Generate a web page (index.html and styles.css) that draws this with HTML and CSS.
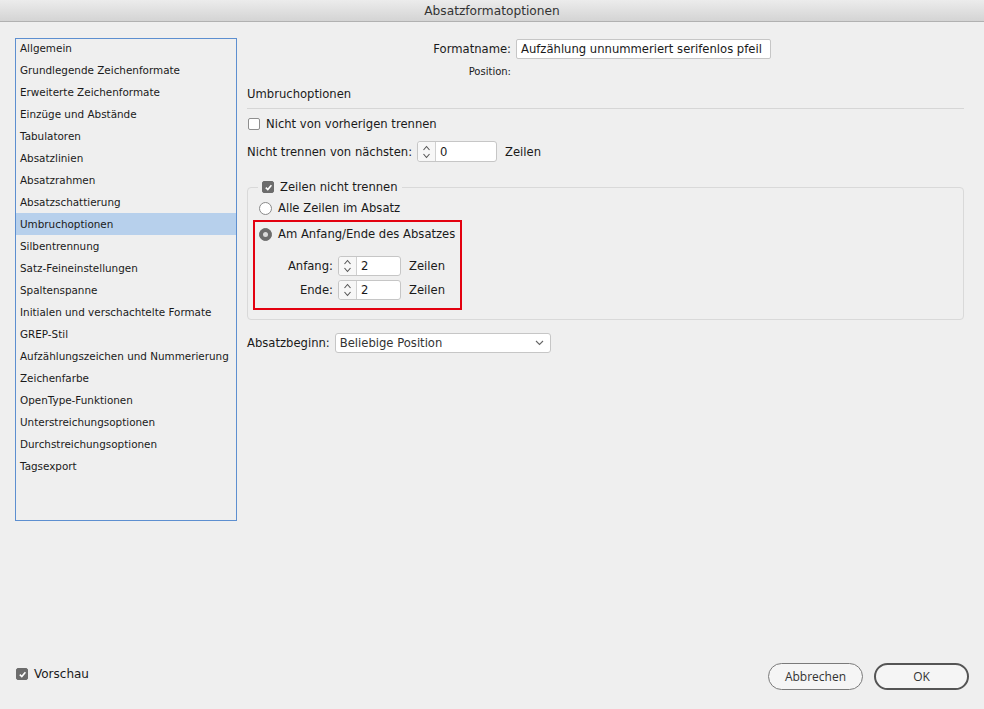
FILE: index.html
```html
<!DOCTYPE html>
<html lang="de">
<head>
<meta charset="utf-8">
<title>Absatzformatoptionen</title>
<link rel="stylesheet" href="styles.css">
</head>
<body>
<div class="dialog">
  <div class="titlebar">Absatzformatoptionen</div>
  <div class="content">
    <ul class="sidebar">
      <li>Allgemein</li>
      <li>Grundlegende Zeichenformate</li>
      <li>Erweiterte Zeichenformate</li>
      <li>Einzüge und Abstände</li>
      <li>Tabulatoren</li>
      <li>Absatzlinien</li>
      <li>Absatzrahmen</li>
      <li>Absatzschattierung</li>
      <li class="selected">Umbruchoptionen</li>
      <li>Silbentrennung</li>
      <li>Satz-Feineinstellungen</li>
      <li>Spaltenspanne</li>
      <li>Initialen und verschachtelte Formate</li>
      <li>GREP-Stil</li>
      <li>Aufzählungszeichen und Nummerierung</li>
      <li>Zeichenfarbe</li>
      <li>OpenType-Funktionen</li>
      <li>Unterstreichungsoptionen</li>
      <li>Durchstreichungsoptionen</li>
      <li>Tagsexport</li>
    </ul>
    <div class="main">
      <div class="name-row">
        <span class="name-label">Formatname:</span>
        <span class="textfield name-field">Aufzählung unnummeriert serifenlos pfeil</span>
      </div>
      <div class="position-row"><span class="name-label small">Position:</span></div>
      <div class="section-title">Umbruchoptionen</div>
      <div class="separator"></div>
      <div class="check-row">
        <span class="checkbox"></span>
        <span>Nicht von vorherigen trennen</span>
      </div>
      <div class="spin-row">
        <span>Nicht trennen von nächsten:</span>
        <span class="spinner wide">
          <span class="stepper"><svg width="9" height="16" viewBox="0 0 9 16"><path d="M1.5 6 L4.5 2.5 L7.5 6 M1.5 10 L4.5 13.5 L7.5 10" fill="none" stroke="#555" stroke-width="1.1"/></svg></span>
          <span class="value">0</span>
        </span>
        <span class="unit">Zeilen</span>
      </div>
      <fieldset class="group">
        <legend class="legend">
          <span class="checkbox checked"><svg width="9" height="9" viewBox="0 0 9 9"><path d="M1.8 4.6 L3.8 6.6 L7.4 2.2" fill="none" stroke="#fff" stroke-width="1.6"/></svg></span>
          <span>Zeilen nicht trennen</span>
        </legend>
        <div class="radio-row first">
          <span class="radio"></span>
          <span>Alle Zeilen im Absatz</span>
        </div>
        <div class="highlight">
          <div class="radio-row">
            <span class="radio on"></span>
            <span>Am Anfang/Ende des Absatzes</span>
          </div>
          <div class="sub-row">
            <span class="sub-label">Anfang:</span>
            <span class="spinner narrow">
              <span class="stepper"><svg width="9" height="16" viewBox="0 0 9 16"><path d="M1.5 6 L4.5 2.5 L7.5 6 M1.5 10 L4.5 13.5 L7.5 10" fill="none" stroke="#555" stroke-width="1.1"/></svg></span>
              <span class="value">2</span>
            </span>
            <span class="unit">Zeilen</span>
          </div>
          <div class="sub-row">
            <span class="sub-label">Ende:</span>
            <span class="spinner narrow">
              <span class="stepper"><svg width="9" height="16" viewBox="0 0 9 16"><path d="M1.5 6 L4.5 2.5 L7.5 6 M1.5 10 L4.5 13.5 L7.5 10" fill="none" stroke="#555" stroke-width="1.1"/></svg></span>
              <span class="value">2</span>
            </span>
            <span class="unit">Zeilen</span>
          </div>
        </div>
      </fieldset>
      <div class="select-row">
        <span>Absatzbeginn:</span>
        <span class="select">
          <span>Beliebige Position</span>
          <svg width="9" height="6" viewBox="0 0 9 6"><path d="M1 1 L4.5 4.5 L8 1" fill="none" stroke="#666" stroke-width="1.1"/></svg>
        </span>
      </div>
    </div>
  </div>
  <div class="footer">
    <div class="preview">
      <span class="checkbox checked"><svg width="9" height="9" viewBox="0 0 9 9"><path d="M1.8 4.6 L3.8 6.6 L7.4 2.2" fill="none" stroke="#fff" stroke-width="1.6"/></svg></span>
      <span>Vorschau</span>
    </div>
    <div class="buttons">
      <button class="btn">Abbrechen</button>
      <button class="btn default">OK</button>
    </div>
  </div>
</div>
</body>
</html>
```
FILE: styles.css
```css
* { box-sizing: border-box; }
html, body { margin: 0; padding: 0; }
body {
  width: 984px;
  height: 709px;
  background: #efefef;
  font-family: "DejaVu Sans", "Open Sans", sans-serif;
  color: #1a1a1a;
  overflow: hidden;
}
.dialog {
  height: 709px;
  display: flex;
  flex-direction: column;
}
.titlebar {
  height: 22px;
  flex: none;
  background: linear-gradient(#ececec, #d4d4d4);
  border-bottom: 1px solid #b1b1b1;
  text-align: center;
  font-size: 12.2px;
  line-height: 22px;
  color: #333;
}
.content {
  flex: 1;
  display: flex;
  padding: 16px 0 0 15px;
}
.sidebar {
  list-style: none;
  margin: 0;
  padding: 0;
  width: 222px;
  height: 483px;
  border: 1px solid #5d8fd0;
  font-size: 10.4px;
  flex: none;
}
.sidebar li {
  height: 22px;
  line-height: 22px;
  padding-left: 4px;
  white-space: nowrap;
}
.sidebar li:first-child { margin-top: -2px; }
.sidebar li.selected { background: #b7d0ec; }
.main {
  margin-left: 10px;
  width: 717px;
  font-size: 11.6px;
}
.name-row {
  display: flex;
  align-items: center;
  height: 20px;
  margin-top: 1px;
}
.name-label {
  width: 264px;
  text-align: right;
  flex: none;
}
.name-label.small { font-size: 10px; }
.textfield {
  height: 20px;
  line-height: 18px;
  border: 1px solid #c6c6c6;
  background: #fff;
  border-radius: 2px;
  padding: 0 4px;
}
.name-field { width: 255px; margin-left: 5px; white-space: nowrap; overflow: hidden; }
.position-row {
  display: flex;
  height: 14px;
  line-height: 14px;
  margin-top: 6px;
}
.section-title {
  margin-top: 7px;
  height: 16px;
  line-height: 16px;
}
.separator {
  margin-top: 6px;
  height: 1px;
  background: #d6d6d6;
}
.check-row {
  display: flex;
  align-items: center;
  gap: 6px;
  height: 16px;
  margin-top: 7px;
  padding-left: 1px;
}
.checkbox {
  width: 12px;
  height: 12px;
  border: 1px solid #8e8e8e;
  border-radius: 2px;
  background: #fff;
  flex: none;
  display: inline-flex;
  align-items: center;
  justify-content: center;
}
.checkbox.checked {
  background: #6c6c6c;
  border-color: #6c6c6c;
}
.spin-row {
  display: flex;
  align-items: center;
  height: 21px;
  margin-top: 9px;
}
.spinner {
  display: inline-flex;
  height: 21px;
  border: 1px solid #c6c6c6;
  border-radius: 3px;
  background: #fff;
  margin-left: 5px;
  flex: none;
}
.spinner.wide { width: 80px; }
.spinner.narrow { width: 63px; height: 20px; }
.stepper {
  width: 18px;
  border-right: 1px solid #d0d0d0;
  display: flex;
  align-items: center;
  justify-content: center;
  background: #f7f7f7;
  border-radius: 3px 0 0 3px;
}
.value {
  padding-left: 4px;
  display: flex;
  align-items: center;
}
.unit { margin-left: 8px; }
.group {
  margin: 18px 0 0 0;
  padding: 0 0 10px 0;
  border: 1px solid #d9d9d9;
  border-radius: 4px;
  height: 140px;
  min-width: 0;
}
.legend {
  display: flex;
  align-items: center;
  gap: 6px;
  margin-left: 10px;
  padding: 0 4px;
  height: 14px;
}
.radio-row {
  display: flex;
  align-items: center;
  gap: 6px;
  height: 16px;
  padding-left: 11px;
}
.radio-row.first { margin-top: 6px; }
.radio {
  width: 13px;
  height: 13px;
  border-radius: 50%;
  border: 1px solid #8a8a8a;
  background: #fff;
  flex: none;
  display: inline-flex;
  align-items: center;
  justify-content: center;
}
.radio.on {
  background: #6c6c6c;
  border-color: #6c6c6c;
}
.radio.on::after {
  content: "";
  width: 5px;
  height: 5px;
  border-radius: 50%;
  background: #d9d9d9;
}
.highlight {
  margin: 4px 0 0 5px;
  width: 209px;
  height: 90px;
  border: 2px solid #e3000f;
  padding-top: 4px;
}
.highlight .radio-row { padding-left: 4px; }
.sub-row {
  display: flex;
  align-items: center;
  height: 20px;
  margin-top: 4px;
}
.highlight .radio-row + .sub-row { margin-top: 14px; }
.sub-label {
  width: 78px;
  text-align: right;
  flex: none;
}
.select-row {
  display: flex;
  align-items: center;
  height: 20px;
  margin-top: 13px;
}
.select {
  margin-left: 5px;
  width: 216px;
  height: 20px;
  border: 1px solid #c6c6c6;
  border-radius: 3px;
  background: #fff;
  display: flex;
  align-items: center;
  justify-content: space-between;
  padding: 0 6px 0 4px;
  color: #333;
}
.footer {
  flex: none;
  height: 54px;
  display: flex;
  justify-content: space-between;
  align-items: flex-start;
  padding: 8px 15px 0 16px;
}
.preview {
  display: flex;
  align-items: center;
  gap: 6px;
  height: 14px;
  margin-top: 4px;
  font-size: 12px;
}
.buttons {
  display: flex;
  gap: 11px;
}
.btn {
  width: 95px;
  height: 27px;
  border-radius: 14px;
  border: 1px solid #7a7a7a;
  background: #f5f5f5;
  font-family: "Open Sans", "DejaVu Sans", sans-serif;
  font-size: 12px;
  color: #333;
  padding: 0;
}
.btn.default { border: 2px solid #555; }
```
